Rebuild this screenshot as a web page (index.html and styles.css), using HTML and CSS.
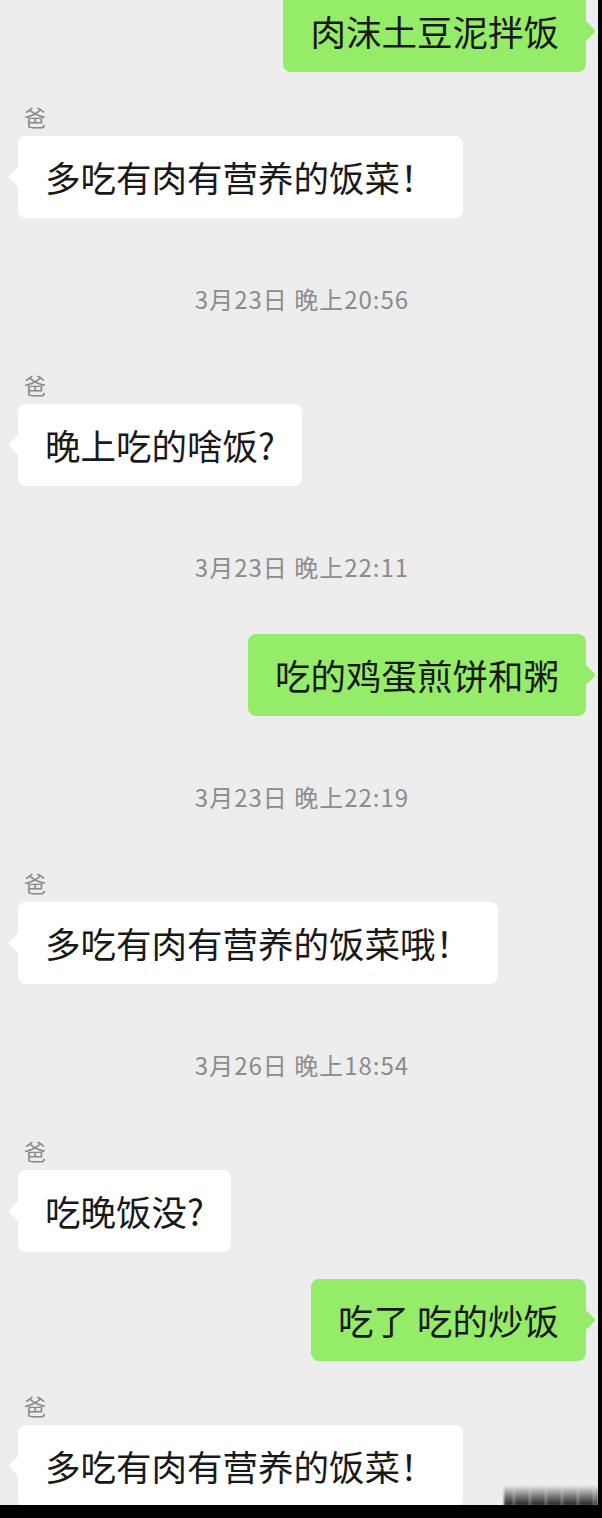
FILE: index.html
```html
<!DOCTYPE html>
<html lang="zh-CN">
<head>
<meta charset="utf-8">
<title>聊天记录</title>
<link rel="stylesheet" href="styles.css">
</head>
<body>
<main class="chat">
  <div class="msg out"><div class="bubble">肉沫土豆泥拌饭</div></div>
  <div class="msg in"><div class="name">爸</div><div class="bubble">多吃有肉有营养的饭菜！</div></div>
  <div class="time">3月23日 晚上20:56</div>
  <div class="msg in"><div class="name">爸</div><div class="bubble">晚上吃的啥饭?</div></div>
  <div class="time">3月23日 晚上22:11</div>
  <div class="msg out"><div class="bubble">吃的鸡蛋煎饼和粥</div></div>
  <div class="time">3月23日 晚上22:19</div>
  <div class="msg in"><div class="name">爸</div><div class="bubble">多吃有肉有营养的饭菜哦！</div></div>
  <div class="time">3月26日 晚上18:54</div>
  <div class="msg in"><div class="name">爸</div><div class="bubble">吃晚饭没?</div></div>
  <div class="msg out"><div class="bubble">吃了 吃的炒饭</div></div>
  <div class="msg in"><div class="name">爸</div><div class="bubble">多吃有肉有营养的饭菜！</div></div>
</main>
<div class="watermark"></div>
<div class="right-bar"></div>
<div class="bottom-bar"></div>
</body>
</html>
```
FILE: styles.css
```css
html, body {
  margin: 0;
  padding: 0;
  height: 1518px;
  overflow: hidden;
  background: #ededed;
}

body {
  position: relative;
  font-family: "Noto Sans CJK SC", "Noto Sans", sans-serif;
  color: #191919;
}

.chat {
  padding: 0 16px 0 18px;
  display: flex;
  flex-direction: column;
}

.msg {
  display: flex;
}

.msg.out {
  justify-content: flex-end;
}

.msg.in {
  flex-direction: column;
  align-items: flex-start;
}

.msg.out:first-child {
  margin-top: -10px;
}

.msg.out + .msg.in {
  margin-top: 32px;
}

.msg.in + .msg.out {
  margin-top: 27px;
}

.time + .msg.in {
  margin-top: 58px;
}

.time + .msg.out {
  margin-top: 52px;
}

.name {
  font-size: 22px;
  line-height: 24px;
  color: #8a8a8a;
  padding-left: 6px;
  margin-bottom: 8px;
}

.bubble {
  position: relative;
  font-size: 35.5px;
  line-height: 46px;
  padding: 18px 27px;
  border-radius: 8px;
  background: #ffffff;
  white-space: pre;
}

.bubble::before {
  content: "";
  position: absolute;
  top: 34px;
  width: 14px;
  height: 14px;
  border-radius: 2px;
  transform: rotate(45deg);
  background: inherit;
}

.msg.in .bubble::before {
  left: -7px;
}

.msg.out .bubble {
  background: #95ec69;
}

.msg.out .bubble::before {
  right: -7px;
}

.time {
  margin-top: 66px;
  text-align: center;
  font-size: 24px;
  letter-spacing: 1px;
  line-height: 30px;
  color: #8c8c8c;
}

.watermark {
  position: absolute;
  left: 504px;
  right: 4px;
  bottom: 12px;
  height: 20px;
  background:
    repeating-linear-gradient(90deg, rgba(237, 237, 237, 0) 0 9px, rgba(237, 237, 237, 0.35) 9px 11px, rgba(237, 237, 237, 0) 11px 16px),
    linear-gradient(180deg, rgba(40, 40, 40, 0.05), rgba(30, 30, 30, 0.6) 55%, rgba(20, 20, 20, 0.95));
  filter: blur(1px);
}

.right-bar {
  position: absolute;
  top: 0;
  right: 0;
  bottom: 0;
  width: 4px;
  background: #000000;
}

.bottom-bar {
  position: absolute;
  left: 0;
  right: 0;
  bottom: 0;
  height: 13px;
  background: #000000;
}
```
